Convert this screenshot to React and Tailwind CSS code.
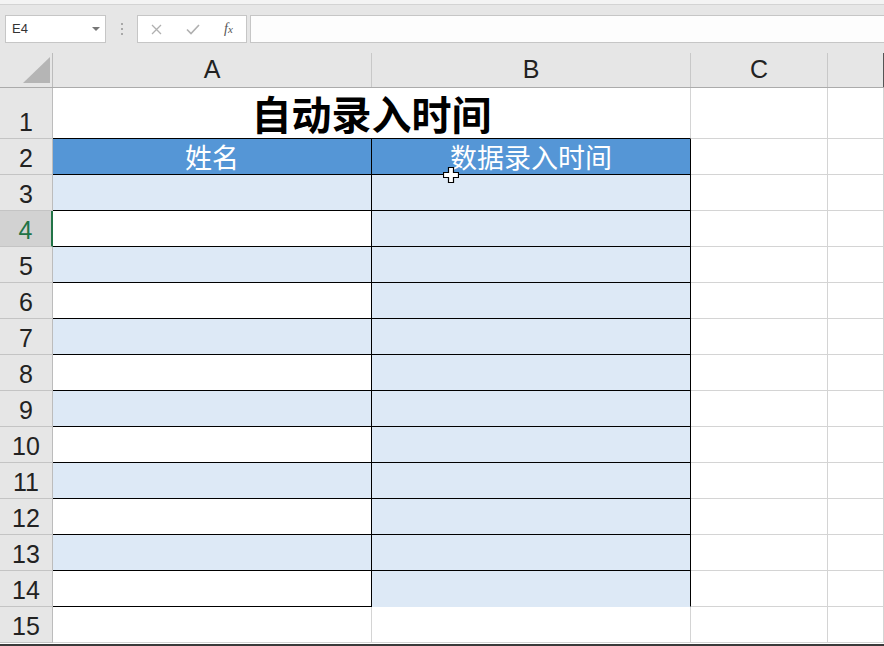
import React from 'react';

const lightBlue = 'bg-[#dde9f6]';

function RowHead({ n, h, active }) {
  return (
    <div
      className={
        active
          ? 'w-[53px] shrink-0 flex items-end justify-center pb-[3px] bg-[#d2d2d2] text-[#217346] border-r-2 border-r-[#217346] border-b border-b-[#c4c4c4] text-[25px] leading-none'
          : 'w-[53px] shrink-0 flex items-end justify-center pb-[3px] bg-[#e6e6e6] text-[#222] border-r border-r-[#bcbcbc] border-b border-b-[#c4c4c4] text-[25px] leading-none'
      }
      style={{ height: h }}
    >
      {n}
    </div>
  );
}

function Grid() {
  return (
    <>
      <div className="w-[137px] h-full shrink-0 border-r border-b border-[#d4d4d4] bg-white" />
      <div className="w-[56px] h-full shrink-0 border-r border-b border-[#d4d4d4] bg-white" />
    </>
  );
}

export default function App() {
  const rows = [3, 4, 5, 6, 7, 8, 9, 10, 11, 12, 13, 14];

  return (
    <div className="relative w-[884px] h-[646px] overflow-hidden bg-white font-['Liberation_Sans','Noto_Sans_CJK_SC',sans-serif]">
      {/* ribbon edge */}
      <div className="h-[5px] bg-[#f3f3f3] border-b border-[#d3d3d3]" />

      {/* formula bar */}
      <div className="h-[48px] bg-[#e6e6e6] flex items-start pt-[10px] pl-[5px]">
        <div className="w-[101px] h-[28px] bg-white border border-[#c6c6c6] flex items-center pl-[6px] pr-[5px] text-[13px] text-[#333]">
          <span className="flex-1">E4</span>
          <svg width="8" height="5" viewBox="0 0 8 5">
            <path d="M0 0 L8 0 L4 4 Z" fill="#777" />
          </svg>
        </div>
        <div className="w-[31px] h-[28px] flex flex-col items-center justify-center gap-[3px]">
          <span className="w-[2px] h-[2px] bg-[#a8a8a8]" />
          <span className="w-[2px] h-[2px] bg-[#a8a8a8]" />
          <span className="w-[2px] h-[2px] bg-[#a8a8a8]" />
        </div>
        <div className="w-[110px] h-[28px] bg-white border border-[#c6c6c6] flex items-center">
          <div className="w-[37px] flex justify-center">
            <svg width="11" height="11" viewBox="0 0 11 11">
              <path d="M1 1 L10 10 M10 1 L1 10" stroke="#b0b0b0" strokeWidth="1.3" />
            </svg>
          </div>
          <div className="w-[36px] flex justify-center">
            <svg width="14" height="11" viewBox="0 0 14 11">
              <path d="M1 5.5 L5 9.5 L13 1" stroke="#b0b0b0" strokeWidth="1.6" fill="none" />
            </svg>
          </div>
          <div className="w-[35px] flex justify-center text-[#555] font-['Liberation_Serif',serif] italic text-[14px] leading-none">
            f<span className="text-[11px] relative top-[2px]">x</span>
          </div>
        </div>
        <div className="ml-[3px] flex-1 h-[28px] bg-[#fdfdfd] border border-r-0 border-[#c6c6c6]" />
      </div>

      {/* column headers */}
      <div className="flex h-[35px] bg-[#e6e6e6] border-b border-[#ababab] text-[25px] leading-none text-[#222]">
        <div className="w-[53px] shrink-0 relative border-r border-[#bcbcbc]">
          <svg className="absolute left-[23px] top-[4px]" width="27" height="26" viewBox="0 0 27 26">
            <path d="M27 0 L27 26 L0 26 Z" fill="#b5b5b5" />
          </svg>
        </div>
        <div className="w-[319px] shrink-0 border-r border-[#c8c8c8] flex items-end justify-center pb-[5px]">A</div>
        <div className="w-[319px] shrink-0 border-r border-[#c8c8c8] flex items-end justify-center pb-[5px]">B</div>
        <div className="w-[137px] shrink-0 border-r border-[#c8c8c8] flex items-end justify-center pb-[5px]">C</div>
        <div className="w-[56px] shrink-0 border-r border-[#555]" />
      </div>

      {/* row 1: title */}
      <div className="flex h-[51px]">
        <RowHead n={1} h={51} />
        <div className="w-[638px] shrink-0 border-b border-black border-r border-r-[#d4d4d4] flex items-center justify-center font-['Noto_Sans_CJK_SC',sans-serif] font-bold text-[40px] leading-none text-black">
          自动录入时间
        </div>
        <Grid />
      </div>

      {/* row 2: header */}
      <div className="flex h-[36px]">
        <RowHead n={2} h={36} />
        <div className="w-[319px] shrink-0 bg-[#5596d6] border-r border-b border-black flex items-center justify-center font-['Noto_Sans_CJK_SC',sans-serif] text-[27px] leading-none text-white">
          姓名
        </div>
        <div className="w-[319px] shrink-0 bg-[#5596d6] border-r border-b border-black flex items-center justify-center font-['Noto_Sans_CJK_SC',sans-serif] text-[27px] leading-none text-white">
          数据录入时间
        </div>
        <Grid />
      </div>

      {/* data rows */}
      {rows.map((r) => (
        <div key={r} className="flex h-[36px]">
          <RowHead n={r} h={36} active={r === 4} />
          <div
            className={
              r % 2 === 1
                ? `w-[319px] shrink-0 ${lightBlue} border-r border-b border-black`
                : 'w-[319px] shrink-0 bg-white border-r border-b border-black'
            }
          />
          <div
            className={
              r === 14
                ? `w-[319px] shrink-0 ${lightBlue} border-r border-r-black border-b border-b-[#dde9f6]`
                : `w-[319px] shrink-0 ${lightBlue} border-r border-b border-black`
            }
          />
          <Grid />
        </div>
      ))}

      {/* row 15 */}
      <div className="flex h-[36px]">
        <RowHead n={15} h={36} />
        <div className="w-[319px] shrink-0 border-r border-b border-[#d4d4d4]" />
        <div className="w-[319px] shrink-0 border-r border-b border-[#d4d4d4]" />
        <Grid />
      </div>

      <div className="h-[3px] bg-white border-b-2 border-[#3a3a3a]" />

      {/* mouse cursor */}
      <svg className="absolute left-[443px] top-[167px]" width="16" height="16" viewBox="0 0 16 16">
        <path
          d="M5.5 0.5 H10.5 V5.5 H15.5 V10.5 H10.5 V15.5 H5.5 V10.5 H0.5 V5.5 H5.5 Z"
          fill="#fff"
          stroke="#000"
          strokeWidth="1.2"
        />
      </svg>
    </div>
  );
}
